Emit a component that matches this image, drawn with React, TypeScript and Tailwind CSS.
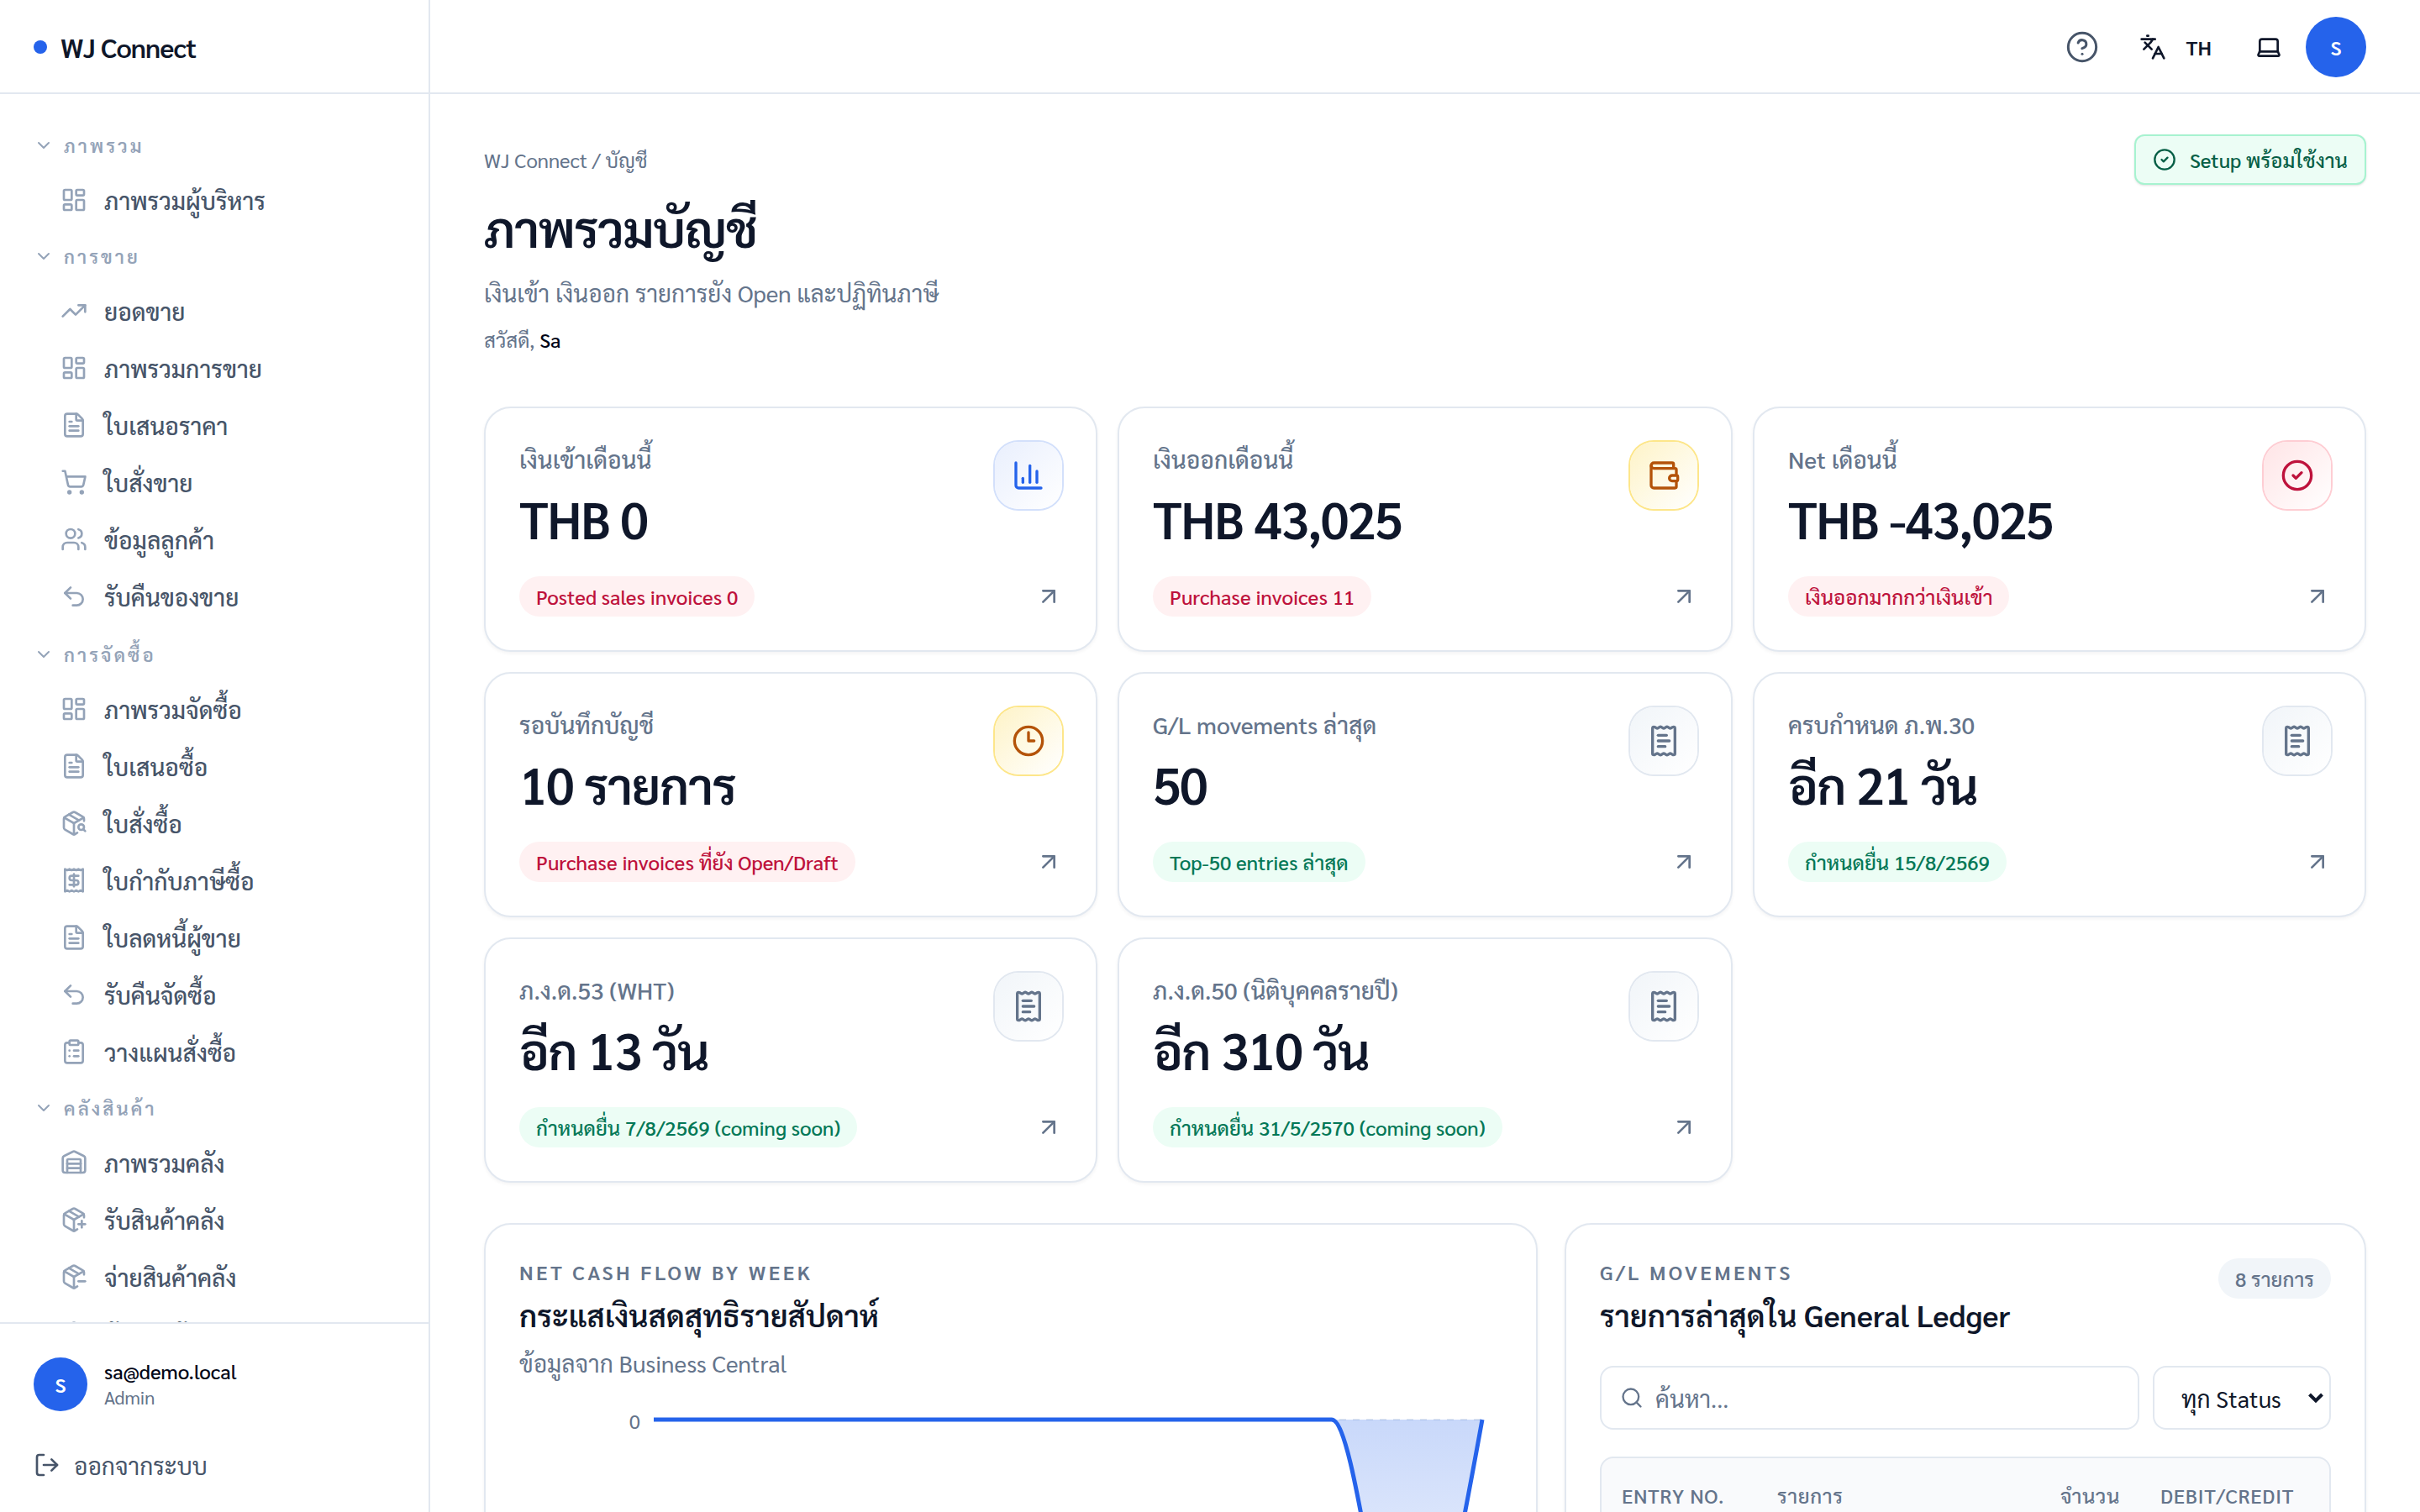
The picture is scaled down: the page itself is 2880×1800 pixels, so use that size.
import type { LucideIcon } from "lucide-react"
import {
  ArrowUpRight,
  ChartColumn,
  ChevronDown,
  CircleCheck,
  CircleHelp,
  ClipboardList,
  Clock3,
  FileText,
  Languages,
  Laptop,
  LayoutDashboard,
  LogOut,
  PackageMinus,
  PackagePlus,
  PackageSearch,
  ReceiptText,
  Receipt,
  Search,
  ShoppingCart,
  TrendingUp,
  Undo2,
  Users,
  Wallet,
  Warehouse,
} from "lucide-react"

type NavItem = { label: string; icon: LucideIcon }
type NavSection = { title: string; items: NavItem[] }

const sections: NavSection[] = [
  {
    title: "ภาพรวม",
    items: [{ label: "ภาพรวมผู้บริหาร", icon: LayoutDashboard }],
  },
  {
    title: "การขาย",
    items: [
      { label: "ยอดขาย", icon: TrendingUp },
      { label: "ภาพรวมการขาย", icon: LayoutDashboard },
      { label: "ใบเสนอราคา", icon: FileText },
      { label: "ใบสั่งขาย", icon: ShoppingCart },
      { label: "ข้อมูลลูกค้า", icon: Users },
      { label: "รับคืนของขาย", icon: Undo2 },
    ],
  },
  {
    title: "การจัดซื้อ",
    items: [
      { label: "ภาพรวมจัดซื้อ", icon: LayoutDashboard },
      { label: "ใบเสนอซื้อ", icon: FileText },
      { label: "ใบสั่งซื้อ", icon: PackageSearch },
      { label: "ใบกำกับภาษีซื้อ", icon: Receipt },
      { label: "ใบลดหนี้ผู้ขาย", icon: FileText },
      { label: "รับคืนจัดซื้อ", icon: Undo2 },
      { label: "วางแผนสั่งซื้อ", icon: ClipboardList },
    ],
  },
  {
    title: "คลังสินค้า",
    items: [
      { label: "ภาพรวมคลัง", icon: Warehouse },
      { label: "รับสินค้าคลัง", icon: PackagePlus },
      { label: "จ่ายสินค้าคลัง", icon: PackageMinus },
      { label: "ย้ายสินค้า", icon: PackageSearch },
    ],
  },
]

const iconTones = {
  blue: "from-[#e9effd] to-white ring-[#d3e0fb] text-[#2563eb]",
  amber: "from-[#fef3c7] to-white ring-[#fde68a] text-[#b45309]",
  rose: "from-[#ffe4e6] to-white ring-[#fecdd3] text-[#be123c]",
  slate: "from-[#f1f5f9] to-white ring-[#e2e8f0] text-[#64748b]",
}

const pillTones = {
  rose: "bg-[#fff1f2] text-[#be123c]",
  green: "bg-[#ecfdf5] text-[#047857]",
}

type Kpi = {
  label: string
  value: string
  note: string
  pill: keyof typeof pillTones
  tone: keyof typeof iconTones
  icon: LucideIcon
}

const kpis: Kpi[] = [
  { label: "เงินเข้าเดือนนี้", value: "THB 0", note: "Posted sales invoices 0", pill: "rose", tone: "blue", icon: ChartColumn },
  { label: "เงินออกเดือนนี้", value: "THB 43,025", note: "Purchase invoices 11", pill: "rose", tone: "amber", icon: Wallet },
  { label: "Net เดือนนี้", value: "THB -43,025", note: "เงินออกมากกว่าเงินเข้า", pill: "rose", tone: "rose", icon: CircleCheck },
  { label: "รอบันทึกบัญชี", value: "10 รายการ", note: "Purchase invoices ที่ยัง Open/Draft", pill: "rose", tone: "amber", icon: Clock3 },
  { label: "G/L movements ล่าสุด", value: "50", note: "Top-50 entries ล่าสุด", pill: "green", tone: "slate", icon: ReceiptText },
  { label: "ครบกำหนด ภ.พ.30", value: "อีก 21 วัน", note: "กำหนดยื่น 15/8/2569", pill: "green", tone: "slate", icon: ReceiptText },
  { label: "ภ.ง.ด.53 (WHT)", value: "อีก 13 วัน", note: "กำหนดยื่น 7/8/2569 (coming soon)", pill: "green", tone: "slate", icon: ReceiptText },
  { label: "ภ.ง.ด.50 (นิติบุคคลรายปี)", value: "อีก 310 วัน", note: "กำหนดยื่น 31/5/2570 (coming soon)", pill: "green", tone: "slate", icon: ReceiptText },
]

function Sidebar() {
  return (
    <aside className="flex h-full w-[512px] shrink-0 flex-col border-r-2 border-[#e2e8f0] bg-white">
      <div className="flex h-28 shrink-0 items-center gap-4 border-b-2 border-[#e2e8f0] px-10 pt-0.5">
        <span className="size-4 rounded-full bg-[#2563eb]" />
        <span className="text-[32px] leading-10 font-semibold tracking-tight text-[#0f172a]">WJ Connect</span>
      </div>

      <nav className="flex min-h-0 flex-1 flex-col gap-[5px] overflow-hidden px-10 pt-[31px]">
        {sections.map((section) => (
          <div key={section.title} className="shrink-0 nth-3:mt-0.5">
            <div className="flex h-[59px] items-center gap-3 text-[#94a3b8]">
              <ChevronDown size={24} />
              <span className="text-[22px] leading-8 font-semibold tracking-[0.14em]">{section.title}</span>
            </div>
            <div className="mt-1 space-y-1">
              {section.items.map(({ label, icon: Icon }) => (
                <a key={label} className="flex h-16 items-center gap-5 pl-8">
                  <Icon size={32} className="text-[#94a3b8]" />
                  <span className="text-[28px] leading-10 font-medium text-[#475569]">{label}</span>
                </a>
              ))}
            </div>
          </div>
        ))}
      </nav>

      <div className="h-[226px] shrink-0 border-t-2 border-[#e2e8f0] px-10 pt-10">
        <div className="flex items-start gap-5">
          <div className="flex size-16 items-center justify-center rounded-full bg-[#2563eb] text-2xl font-semibold text-white">S</div>
          <div>
            <p className="text-2xl leading-8 font-medium text-[#020617]">sa@demo.local</p>
            <p className="text-[22px] leading-[30px] text-[#64748b]">Admin</p>
          </div>
        </div>
        <button className="mt-11 flex items-center gap-4 text-[#475569]">
          <LogOut size={32} />
          <span className="text-[28px] leading-10">ออกจากระบบ</span>
        </button>
      </div>
    </aside>
  )
}

function Topbar() {
  return (
    <header className="flex h-28 shrink-0 items-center justify-end border-b-2 border-[#e2e8f0] pt-0.5 pr-16 text-[#0f172a]">
      <CircleHelp size={40} strokeWidth={1.8} className="text-[#475569]" />
      <div className="ml-12 flex items-center gap-6">
        <Languages size={32} />
        <span className="text-2xl leading-8 font-semibold">TH</span>
      </div>
      <Laptop size={32} className="ml-[52px]" />
      <div className="ml-7 flex size-18 items-center justify-center rounded-full bg-[#2563eb] text-2xl font-semibold text-white">S</div>
    </header>
  )
}

function PageHeader() {
  return (
    <div className="flex items-start justify-between">
      <div className="pt-3.5">
        <p className="text-2xl leading-8 text-[#64748b]">WJ Connect / บัญชี</p>
        <h1 className="mt-7 text-[60px] leading-[72px] font-semibold tracking-tight text-[#0f172a]">ภาพรวมบัญชี</h1>
        <p className="mt-[22px] text-[28px] leading-10 text-[#64748b]">เงินเข้า เงินออก รายการยัง Open และปฏิทินภาษี</p>
        <p className="mt-5 text-2xl leading-8 text-[#64748b]">
          สวัสดี, <span className="font-medium text-[#020617]">Sa</span>
        </p>
      </div>
      <div className="flex h-[60px] items-center gap-4 rounded-xl border-2 border-[#a7f3d0] bg-[#ecfdf5] px-5 text-[#065f46] shadow-sm">
        <CircleCheck size={28} />
        <span className="text-2xl leading-8 font-medium">Setup พร้อมใช้งาน</span>
      </div>
    </div>
  )
}

function KpiCard({ label, value, note, pill, tone, icon: Icon }: Kpi) {
  return (
    <div className="flex h-[292px] flex-col rounded-[32px] border-2 border-[#e2e8f0] bg-white p-10 shadow-[0_2px_4px_rgba(15,23,42,0.05)]">
      <div className="flex h-40 items-start justify-between">
        <div>
          <p className="text-[28px] leading-10 font-medium text-[#64748b]">{label}</p>
          <p className="mt-[15px] text-[60px] leading-[72px] font-semibold tracking-tight text-[#0f172a]">{value}</p>
        </div>
        <div className={`flex size-20 shrink-0 items-center justify-center rounded-[28px] bg-linear-to-br ring-2 ${iconTones[tone]}`}>
          <Icon size={40} />
        </div>
      </div>
      <div className="flex items-center justify-between">
        <span className={`flex h-12 items-center rounded-full px-5 text-2xl leading-8 font-medium ${pillTones[pill]}`}>{note}</span>
        <ArrowUpRight size={32} className="text-[#64748b]" />
      </div>
    </div>
  )
}

function CashFlowPanel() {
  return (
    <section className="h-[760px] rounded-[32px] border-2 border-[#e2e8f0] bg-white p-10 shadow-[0_2px_4px_rgba(15,23,42,0.05)]">
      <p className="text-2xl leading-8 font-semibold tracking-[0.14em] text-[#64748b]">NET CASH FLOW BY WEEK</p>
      <h2 className="mt-[11px] text-4xl leading-[48px] font-semibold text-[#0f172a]">กระแสเงินสดสุทธิรายสัปดาห์</h2>
      <p className="mt-[13px] text-[28px] leading-10 text-[#64748b]">ข้อมูลจาก Business Central</p>
      <svg width="1170" height="400" viewBox="0 0 1170 400" className="mt-4 block">
        <defs>
          <linearGradient id="cashFill" x1="0" y1="0" x2="0" y2="1">
            <stop offset="0%" stopColor="#2563eb" stopOpacity="0.25" />
            <stop offset="100%" stopColor="#2563eb" stopOpacity="0.02" />
          </linearGradient>
        </defs>
        <line x1="160" y1="32" x2="1146" y2="32" stroke="#e2e8f0" strokeWidth="2" strokeDasharray="8 8" />
        <path d="M966.7 32C996.6 32 1026.5 362 1056.4 362C1086.3 362 1116.1 197 1146 32Z" fill="url(#cashFill)" />
        <path
          d="M160 32H966.7C996.6 32 1026.5 362 1056.4 362C1086.3 362 1116.1 197 1146 32"
          fill="none"
          stroke="#2563eb"
          strokeWidth="5"
        />
        <text x="144" y="43" textAnchor="end" fontSize="24" fill="#64748b">0</text>
      </svg>
    </section>
  )
}

function LedgerPanel() {
  return (
    <section className="h-[760px] rounded-[32px] border-2 border-[#e2e8f0] bg-white p-10 shadow-[0_2px_4px_rgba(15,23,42,0.05)]">
      <div className="flex items-start justify-between">
        <div>
          <p className="text-2xl leading-8 font-semibold tracking-[0.14em] text-[#64748b]">G/L MOVEMENTS</p>
          <h2 className="mt-[11px] text-4xl leading-[48px] font-semibold text-[#0f172a]">รายการล่าสุดใน General Ledger</h2>
        </div>
        <span className="flex h-12 items-center rounded-full bg-[#f1f5f9] px-5 text-2xl font-medium text-[#64748b]">8 รายการ</span>
      </div>

      <div className="mt-[37px] flex gap-4">
        <div className="flex h-[76px] flex-1 items-center gap-3.5 rounded-2xl border-2 border-[#e2e8f0] px-[22px] text-[#64748b]">
          <Search size={28} />
          <span className="text-[28px] leading-10">ค้นหา...</span>
        </div>
        <div className="flex h-[76px] w-[212px] items-center justify-between rounded-2xl border-2 border-[#e2e8f0] pr-1.5 pl-8 text-[#0f172a]">
          <span className="text-[28px] leading-10">ทุก Status</span>
          <svg width="20" height="14" viewBox="0 0 20 14" fill="none">
            <path d="M2.5 3L10 10.5L17.5 3" stroke="currentColor" strokeWidth="4" />
          </svg>
        </div>
      </div>

      <div className="mt-8 h-96 rounded-2xl border-2 border-[#e2e8f0] bg-[#f9fafc] px-6 pt-7">
        <div className="flex text-2xl leading-8 font-medium tracking-wide text-[#64748b]">
          <span className="w-[185px]">ENTRY NO.</span>
          <span className="flex-1">รายการ</span>
          <span>จำนวน</span>
          <span className="mr-[18px] ml-12">DEBIT/CREDIT</span>
        </div>
      </div>
    </section>
  )
}

export default function App() {
  return (
    <div className="flex h-[1800px] w-[2880px] overflow-hidden bg-white font-['Sarabun','Noto_Sans_Thai','Noto_Sans',sans-serif]">
      <Sidebar />
      <div className="flex h-full min-w-0 flex-1 flex-col">
        <Topbar />
        <main className="min-h-0 flex-1 overflow-hidden px-16 pt-12">
          <PageHeader />
          <div className="mt-16 grid grid-cols-[730fr_732fr_730fr] gap-6">
            {kpis.map((kpi) => (
              <KpiCard key={kpi.label} {...kpi} />
            ))}
          </div>
          <div className="mt-12 grid grid-cols-[1254fr_954fr] gap-8">
            <CashFlowPanel />
            <LedgerPanel />
          </div>
        </main>
      </div>
    </div>
  )
}
